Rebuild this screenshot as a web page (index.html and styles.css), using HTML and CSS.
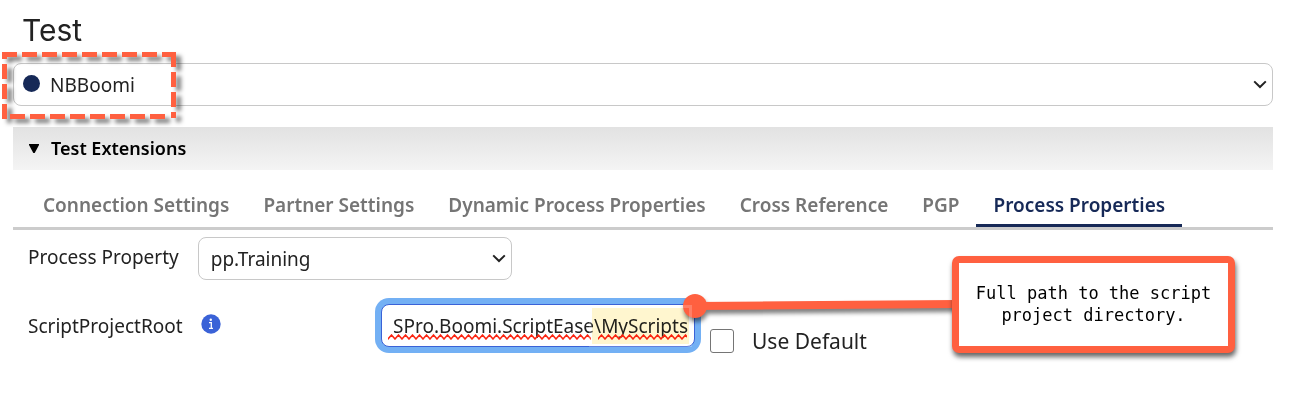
FILE: index.html
```html
<!DOCTYPE html>
<html lang="en">
<head>
<meta charset="utf-8">
<meta name="viewport" content="width=device-width, initial-scale=1">
<title>Test</title>
<link rel="stylesheet" href="styles.css">
</head>
<body>
<main class="page">
  <h1 class="title">Test</h1>

  <div class="select-wrap environment">
    <select class="control environment-select" aria-label="Environment">
      <option>NBBoomi</option>
    </select>
    <span class="status-dot"></span>
    <svg class="chevron" viewBox="0 0 14 9" aria-hidden="true"><path d="M1.2 1.4 7 7l5.800-5.600"/></svg>
    <svg class="dashed-mark" aria-hidden="true">
      <path d="M0 2.500H171M171.500 0V66M163 64.500H0M2.500 67V0"/>
    </svg>
  </div>

  <button class="section-header" type="button" aria-expanded="true">
    <svg class="triangle" viewBox="0 0 10 9" aria-hidden="true"><path d="M0 0h10v1L5.700 9H4.300L0 1z"/></svg>
    Test Extensions
  </button>

  <nav class="tabs">
    <button class="tab" type="button">Connection Settings</button>
    <button class="tab" type="button">Partner Settings</button>
    <button class="tab" type="button">Dynamic Process Properties</button>
    <button class="tab" type="button">Cross Reference</button>
    <button class="tab" type="button">PGP</button>
    <button class="tab tab-active" type="button">Process Properties</button>
  </nav>

  <div class="row property-row">
    <label for="property">Process Property</label>
    <div class="select-wrap">
      <select class="control field" id="property">
        <option>pp.Training</option>
      </select>
      <svg class="chevron" viewBox="0 0 14 9" aria-hidden="true"><path d="M1.2 1.4 7 7l5.800-5.600"/></svg>
    </div>
  </div>

  <div class="row root-row">
    <div class="root-label">
      <label for="root">ScriptProjectRoot</label>
      <svg class="info" viewBox="0 0 20 20" aria-hidden="true">
        <circle cx="10" cy="10" r="9.700" fill="#3a62d7"/>
        <circle cx="9.800" cy="5.800" r="1.200" fill="#fff"/>
        <path d="M8 8.700h2.300v5.500M8 14.300h4" fill="none" stroke="#fff" stroke-width="1.300"/>
      </svg>
    </div>
    <div class="root-input">
      <input class="control field path-field" id="root" type="text" dir="rtl" spellcheck="false" value="SPro.Boomi.ScriptEase\MyScripts">
      <svg class="annotation" width="600" height="120" aria-hidden="true">
        <defs>
          <pattern id="wave" width="7" height="6" patternUnits="userSpaceOnUse" patternTransform="translate(7 30)">
            <path d="M-1 3.700 0 5 3.500 1 7 5 8 3.700" fill="none" stroke="#fb2411" stroke-width="1.500"/>
          </pattern>
        </defs>
        <path d="M7 30h203v6H7zM217 30h89v6h-89z" fill="url(#wave)"/>
        <path class="highlight" d="M211 4h97v36h-97z"/>
        <g class="connector">
          <path d="M313 2 576 0"/>
          <circle cx="314" cy="2" r="12"/>
        </g>
        <path class="highlight-edge" d="M209.500 2.500h100v39h-100z"/>
      </svg>
      <div class="callout">Full path to the script project directory.</div>
    </div>
    <label class="use-default"><input class="check" type="checkbox">Use Default</label>
  </div>
</main>
</body>
</html>
```
FILE: styles.css
```css
* {
  box-sizing: border-box;
}

body {
  margin: 0;
  background: #fff;
  color: #222;
  font: 19px/26px "Noto Sans", sans-serif;
}

.page {
  min-height: 100vh;
  padding: 10px 22px 40px 13px;
}

.title {
  margin: 0 0 13px;
  padding-left: 9px;
  font: 400 30px/40px Inter, sans-serif;
}

.control {
  display: block;
  height: 43px;
  margin: 0;
  border: 1px solid #c8c8c8;
  border-radius: 8px;
  background: #fff;
  color: #222;
  font: inherit;
  appearance: none;
}

.select-wrap {
  position: relative;
}

.environment-select {
  width: 100%;
  padding: 0 36px;
}

.status-dot {
  position: absolute;
  left: 10px;
  top: 12px;
  width: 17px;
  height: 17px;
  border-radius: 50%;
  background: #162957;
}

.chevron {
  position: absolute;
  right: 6px;
  top: 17px;
  width: 14px;
  height: 9px;
  fill: none;
  stroke: #222;
  stroke-width: 2;
}

.dashed-mark {
  position: absolute;
  left: -11px;
  top: -11px;
  width: 174px;
  height: 68px;
  overflow: visible;
  fill: none;
  stroke: #ff6040;
  stroke-width: 5;
  stroke-dasharray: 15 5;
  filter: drop-shadow(5px 4px 2px rgba(0, 0, 0, 0.5));
}

.section-header {
  display: flex;
  align-items: center;
  gap: 12px;
  width: 100%;
  height: 43px;
  margin-top: 21px;
  padding: 0 16px 1px;
  border: 0;
  background: linear-gradient(#e2e2e2, #f4f4f4);
  color: #000;
  font: 600 18px/26px "Noto Sans", sans-serif;
}

.triangle {
  width: 10px;
  height: 9px;
}

.tabs {
  display: flex;
  margin-top: 14px;
  padding: 0 13px;
  border-bottom: 3px solid #ccc;
}

.tab {
  height: 43px;
  padding: 1px 17px 0;
  border: 0;
  border-bottom: 3px solid transparent;
  background: none;
  color: #757575;
  font: 600 19px/26px "Noto Sans", sans-serif;
  white-space: nowrap;
}

.tab-active {
  border-bottom-color: #162957;
  color: #162957;
}

.row {
  display: flex;
  padding-left: 15px;
}

.property-row {
  gap: 19px;
  margin-top: 7px;
  line-height: 40px;
}

.field {
  width: 314px;
  padding: 0 12px;
}

.root-row {
  margin-top: 24px;
}

.root-label {
  display: flex;
  align-items: center;
  gap: 18px;
  width: 353px;
}

.info {
  width: 20px;
  height: 20px;
  margin-bottom: 4px;
}

.root-input {
  position: relative;
}

.path-field {
  padding: 0 6px;
  border-color: #3a62d7;
  outline: 0;
  box-shadow: 0 0 0 6px #73b0f4;
}

.annotation {
  position: absolute;
  left: 0;
  top: 0;
  overflow: visible;
  pointer-events: none;
}

.highlight {
  fill: #fff6cf;
  mix-blend-mode: multiply;
}

.highlight-edge {
  fill: none;
  stroke: #fff;
  stroke-opacity: 0.2;
  stroke-width: 3;
}

.connector {
  fill: #ff6040;
  filter: drop-shadow(1px 4px 2px rgba(0, 0, 0, 0.5));
}

.connector path {
  stroke: #ff6040;
  stroke-width: 8;
}

.callout {
  position: absolute;
  left: 571px;
  top: -48px;
  width: 283px;
  height: 97px;
  padding: 19px 12px;
  border: 7px solid #ff6040;
  border-radius: 7px;
  background: #fff;
  box-shadow: 1px 4px 5px rgba(0, 0, 0, 0.6);
  color: #000;
  font: 17px/22px "DejaVu Sans Mono", monospace;
  text-align: center;
}

.use-default {
  display: flex;
  align-items: center;
  align-self: flex-end;
  gap: 18px;
  margin: 24px 0 -7px 15px;
  font-size: 21px;
}

.check {
  width: 24px;
  height: 24px;
  margin: 0;
  border: 1px solid #757575;
  border-radius: 3px;
  background: #fff;
  appearance: none;
}
```
